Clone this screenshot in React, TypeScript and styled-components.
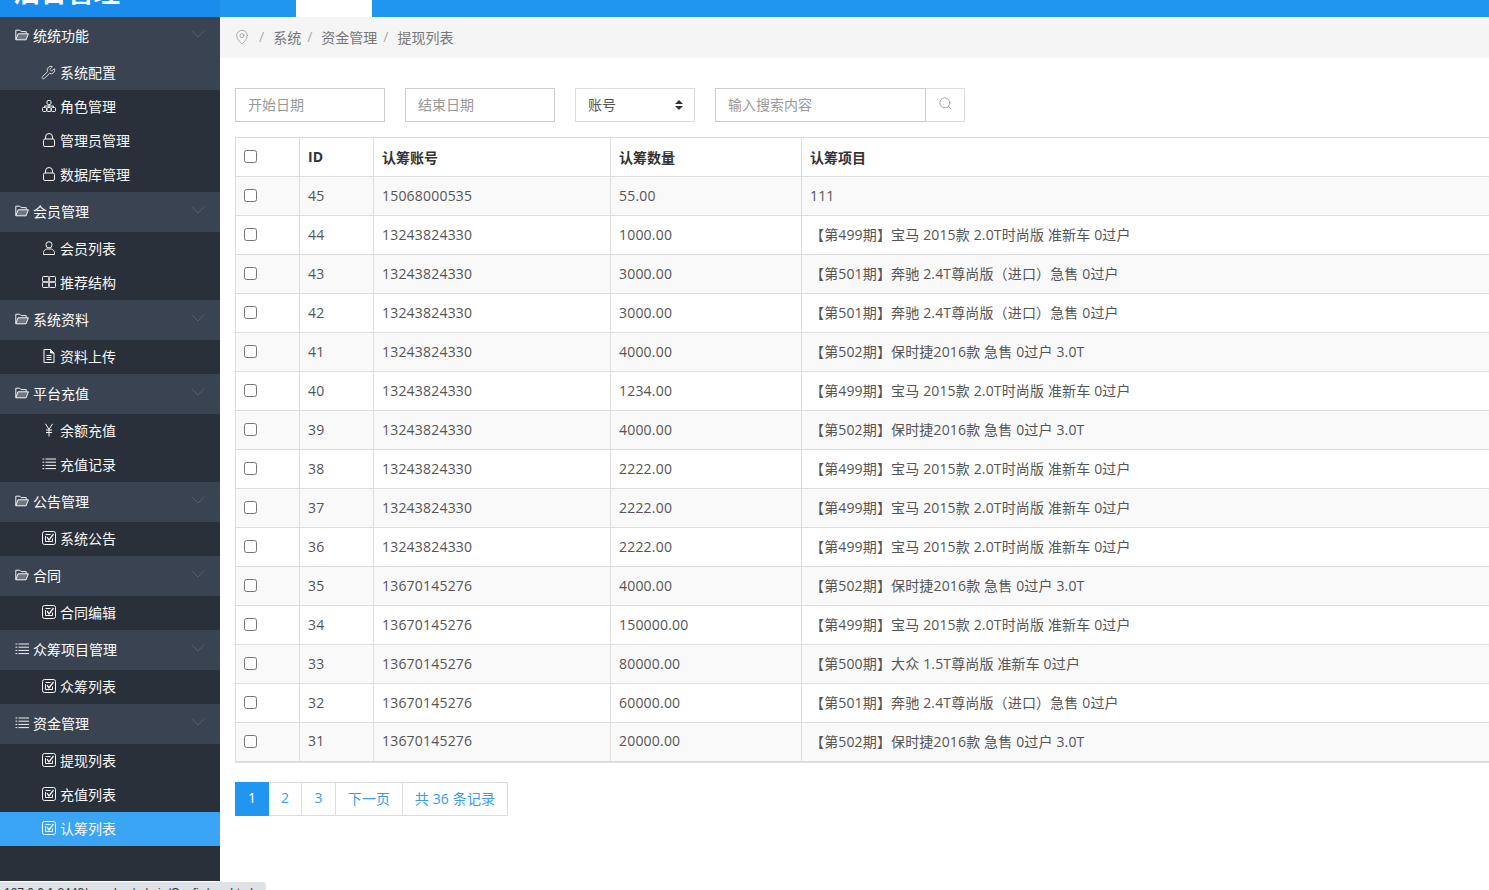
import React from 'react';
import styled, { createGlobalStyle } from 'styled-components';
import { MapPin, Search, Wrench } from 'lucide-react';

const FONT = '"Open Sans", "Noto Sans CJK SC", sans-serif';

const GlobalStyle = createGlobalStyle`
  html, body {
    margin: 0;
    height: 100%;
    overflow: hidden;
    background: #fff;
  }
  body {
    font-family: ${FONT};
    font-size: 14px;
    color: #555;
  }
  * {
    box-sizing: border-box;
  }
`;

const FolderIcon = () => (
  <Glyph viewBox="0 0 14 12">
    <path d="M.8 10.5V1.2h4l1.2 1.4h5.2v2" />
    <path d="M.8 10.8 3 4.8h10.4l-2.3 6z" fill="rgba(255,255,255,.28)" />
  </Glyph>
);

const WrenchIcon = () => (
  <WrenchBox>
    <Wrench size={15} strokeWidth={1.3} />
  </WrenchBox>
);

const SitemapIcon = () => (
  <Glyph viewBox="0 0 14 14">
    <rect x="5" y="1.5" width="4" height="4" rx="1.2" />
    <path d="M7 5.5V8M2.5 8.5V7h9v1.5" />
    <rect x=".5" y="8.5" width="4" height="4" rx="1" />
    <rect x="5" y="8.5" width="4" height="4" rx="1" />
    <rect x="9.5" y="8.5" width="4" height="4" rx="1" />
  </Glyph>
);

const LockIcon = () => (
  <Glyph viewBox="0 0 14 14">
    <rect x="1.5" y="6" width="11" height="7.5" rx="1.5" />
    <path d="M3.5 6V4a3.5 3.5 0 0 1 7 0v2" />
  </Glyph>
);

const UserIcon = () => (
  <Glyph viewBox="0 0 14 14">
    <circle cx="7" cy="3.8" r="3.1" />
    <path d="M1.5 13.5v-1.7c0-2 1.5-3.3 3.3-3.8h4.4c1.8.5 3.3 1.8 3.3 3.8v1.700z" />
  </Glyph>
);

const GridIcon = () => (
  <Glyph viewBox="0 0 14 14">
    <rect x=".5" y="1.5" width="6.3" height="5.3" rx="1" />
    <rect x="7.2" y="1.5" width="6.3" height="5.3" rx="1" />
    <rect x=".5" y="7.2" width="6.3" height="5.3" rx="1" />
    <rect x="7.2" y="7.2" width="6.3" height="5.3" rx="1" />
  </Glyph>
);

const FileIcon = () => (
  <Glyph viewBox="0 0 14 14">
    <path d="M2 .5h6.5L12 4v9.5H2z" />
    <path d="M8.5.5V4H12" fill="currentColor" />
    <path d="M4.5 6.500h5M4.5 8.500h5M4.5 10.500h5" />
  </Glyph>
);

const YenIcon = () => (
  <Glyph viewBox="0 0 14 14">
    <path d="M3.5.8 7 6.5 10.5.8M7 6.5v7M4 7h6M4 9.500h6" />
  </Glyph>
);

const ListIcon = () => (
  <Glyph viewBox="0 0 14 14">
    <path d="M.5 2h1.8M3.5 2H14M.5 5.200h1.8M3.5 5.200H14M.5 8.400h1.8M3.5 8.400H14M.5 11.600h1.8M3.5 11.600H14" />
  </Glyph>
);

const CheckIcon = () => (
  <Glyph viewBox="0 0 14 14">
    <rect x=".5" y=".5" width="13" height="13" rx="2" />
    <path d="M3.5 5v5.500h7V7.500M3.500 3.500h5" />
    <path d="M5 6.200 7 9l4.500-6" strokeWidth="1.300" />
  </Glyph>
);

const ChevronIcon = () => (
  <ChevronGlyph viewBox="0 0 14 8">
    <path d="M.5.5 7 7l6.500-6.500" />
  </ChevronGlyph>
);

const menu = [
  {
    title: '统统功能',
    icon: FolderIcon,
    items: [
      { label: '系统配置', icon: WrenchIcon, hover: true },
      { label: '角色管理', icon: SitemapIcon },
      { label: '管理员管理', icon: LockIcon },
      { label: '数据库管理', icon: LockIcon },
    ],
  },
  {
    title: '会员管理',
    icon: FolderIcon,
    items: [
      { label: '会员列表', icon: UserIcon },
      { label: '推荐结构', icon: GridIcon },
    ],
  },
  { title: '系统资料', icon: FolderIcon, items: [{ label: '资料上传', icon: FileIcon }] },
  {
    title: '平台充值',
    icon: FolderIcon,
    items: [
      { label: '余额充值', icon: YenIcon },
      { label: '充值记录', icon: ListIcon },
    ],
  },
  { title: '公告管理', icon: FolderIcon, items: [{ label: '系统公告', icon: CheckIcon }] },
  { title: '合同', icon: FolderIcon, items: [{ label: '合同编辑', icon: CheckIcon }] },
  { title: '众筹项目管理', icon: ListIcon, items: [{ label: '众筹列表', icon: CheckIcon }] },
  {
    title: '资金管理',
    icon: ListIcon,
    items: [
      { label: '提现列表', icon: CheckIcon },
      { label: '充值列表', icon: CheckIcon },
      { label: '认筹列表', icon: CheckIcon, active: true },
    ],
  },
];

const P499 = '【第499期】宝马 2015款 2.0T时尚版 准新车 0过户';
const P501 = '【第501期】奔驰 2.4T尊尚版（进口）急售 0过户';
const P502 = '【第502期】保时捷2016款 急售 0过户 3.0T';
const P500 = '【第500期】大众 1.5T尊尚版 准新车 0过户';

const rows = [
  ['45', '15068000535', '55.00', '111'],
  ['44', '13243824330', '1000.00', P499],
  ['43', '13243824330', '3000.00', P501],
  ['42', '13243824330', '3000.00', P501],
  ['41', '13243824330', '4000.00', P502],
  ['40', '13243824330', '1234.00', P499],
  ['39', '13243824330', '4000.00', P502],
  ['38', '13243824330', '2222.00', P499],
  ['37', '13243824330', '2222.00', P499],
  ['36', '13243824330', '2222.00', P499],
  ['35', '13670145276', '4000.00', P502],
  ['34', '13670145276', '150000.00', P499],
  ['33', '13670145276', '80000.00', P500],
  ['32', '13670145276', '60000.00', P501],
  ['31', '13670145276', '20000.00', P502],
];

const App = (): JSX.Element => {
  return (
    <Page>
      <GlobalStyle />
      <TopBar>
        <Logo>
          <LogoText>后台管理</LogoText>
        </Logo>
        <TopTab />
      </TopBar>
      <Body>
        <Sidebar>
          {menu.map((group, index) => (
            <div key={group.title}>
              <GroupHeader $first={index === 0}>
                <group.icon />
                <GroupTitle>{group.title}</GroupTitle>
                <ChevronIcon />
              </GroupHeader>
              {group.items.map((item) => (
                <SubItem key={item.label} $hover={item.hover} $active={item.active}>
                  <item.icon />
                  <span>{item.label}</span>
                </SubItem>
              ))}
            </div>
          ))}
        </Sidebar>
        <Main>
          <Breadcrumb>
            <PinBox>
              <MapPin size={16} strokeWidth={1} color="#888" />
            </PinBox>
            <Slash>/</Slash>
            <Crumb>系统</Crumb>
            <CrumbSlash>/</CrumbSlash>
            <Crumb>资金管理</Crumb>
            <CrumbSlash>/</CrumbSlash>
            <Crumb>提现列表</Crumb>
          </Breadcrumb>
          <Content>
            <Filters>
              <Field $width={150} placeholder="开始日期" />
              <Field $width={150} placeholder="结束日期" />
              <SelectBox>
                账号
                <Sorter>
                  <UpArrow />
                  <DownArrow />
                </Sorter>
              </SelectBox>
              <SearchGroup>
                <Field $width={211} placeholder="输入搜索内容" />
                <SearchButton>
                  <Search size={15} strokeWidth={1} color="#777" />
                </SearchButton>
              </SearchGroup>
            </Filters>
            <Table>
              <thead>
                <tr>
                  <CheckHead>
                    <Check type="checkbox" />
                  </CheckHead>
                  <IdHead>ID</IdHead>
                  <AccountHead>认筹账号</AccountHead>
                  <AmountHead>认筹数量</AmountHead>
                  <Th>认筹项目</Th>
                </tr>
              </thead>
              <tbody>
                {rows.map((row) => (
                  <Row key={row[0]}>
                    <Td>
                      <RowCheck type="checkbox" />
                    </Td>
                    <NumberCell>{row[0]}</NumberCell>
                    <NumberCell>{row[1]}</NumberCell>
                    <NumberCell>{row[2]}</NumberCell>
                    <ProjectCell>{row[3]}</ProjectCell>
                  </Row>
                ))}
              </tbody>
            </Table>
            <Pagination>
              <PageLink $current $width={34}>1</PageLink>
              <PageLink $width={33}>2</PageLink>
              <PageLink $width={34}>3</PageLink>
              <PageLink $width={67}>下一页</PageLink>
              <PageLink $width={105}>共 36 条记录</PageLink>
            </Pagination>
          </Content>
        </Main>
      </Body>
      <StatusTip>127.0.0.1:8443/member/admin/Config/sys.html</StatusTip>
    </Page>
  );
};

export default App;

const Page = styled.div`
  display: flex;
  flex-direction: column;
  height: 890px;
  overflow: hidden;
`;

const TopBar = styled.header`
  background-color: #2196f0;
  display: flex;
  flex-shrink: 0;
  height: 17px;
`;

const Logo = styled.div`
  align-items: flex-end;
  background-color: #1a8cec;
  display: flex;
  overflow: hidden;
  padding-left: 14px;
  width: 220px;
`;

const LogoText = styled.div`
  color: #fff;
  flex-shrink: 0;
  font-size: 26.5px;
  font-weight: 700;
  line-height: 36px;
  margin-bottom: 7px;
`;

const TopTab = styled.div`
  background-color: #fff;
  margin-left: 76px;
  width: 76px;
`;

const Body = styled.div`
  display: flex;
  flex: 1;
  min-height: 0;
`;

const Sidebar = styled.aside`
  background-color: #2a3039;
  flex-shrink: 0;
  height: 864px;
  width: 220px;
`;

const Glyph = styled.svg`
  fill: none;
  flex-shrink: 0;
  height: 14px;
  stroke: currentColor;
  stroke-width: 1;
  width: 14px;
`;

const WrenchBox = styled.span`
  display: flex;
  height: 14px;
  margin-left: -1px;
  width: 15px;
`;

const ChevronGlyph = styled.svg`
  fill: none;
  height: 8px;
  margin: -3px 0 0 auto;
  stroke: #505b6b;
  stroke-width: 1;
  width: 14px;
`;

const GroupHeader = styled.div<{ $first?: boolean }>`
  align-items: center;
  background-color: #394352;
  color: #f2f2f2;
  display: flex;
  height: ${(p) => (p.$first ? 39 : 40)}px;
  padding: 0 15px ${(p) => (p.$first ? 3 : 2)}px 15px;
`;

const GroupTitle = styled.span`
  color: #fff;
  margin-left: 4px;
`;

const SubItem = styled.div<{ $hover?: boolean; $active?: boolean }>`
  align-items: center;
  background-color: ${(p) => (p.$active ? '#3ba5f5' : p.$hover ? '#394352' : 'transparent')};
  color: #f7f7f7;
  display: flex;
  gap: 4px;
  height: 34px;
  padding: 0 0 2px 42px;
`;

const Main = styled.main`
  flex: 1;
  min-width: 0;
`;

const Breadcrumb = styled.nav`
  align-items: center;
  background-color: #f5f5f5;
  color: #777;
  display: flex;
  height: 41px;
  padding: 0 0 2px 14px;
`;

const PinBox = styled.span`
  display: flex;
`;

const Slash = styled.span`
  color: #aaa;
  margin: 0 9px;
`;

const CrumbSlash = styled.span`
  color: #aaa;
  margin: 0 9px 0 6px;
`;

const Crumb = styled.span`
  color: #777;
`;

const Content = styled.div`
  padding: 30px 0 0 15px;
`;

const Filters = styled.div`
  display: flex;
  gap: 20px;
  height: 34px;
`;

const Field = styled.input<{ $width: number }>`
  border: 1px solid #ccc;
  color: #555;
  font-family: ${FONT};
  font-size: 14px;
  height: 34px;
  outline: none;
  padding: 0 12px 2px;
  width: ${(p) => p.$width}px;

  &::placeholder {
    color: #999;
  }
`;

const SelectBox = styled.div`
  align-items: center;
  border: 1px solid #ddd;
  color: #555;
  display: flex;
  justify-content: space-between;
  padding: 0 12px 2px;
  width: 120px;
`;

const Sorter = styled.span`
  display: flex;
  flex-direction: column;
  gap: 2px;
  margin: 2px -1px 0 0;
`;

const UpArrow = styled.i`
  border-bottom: 4px solid #333;
  border-left: 4px solid transparent;
  border-right: 4px solid transparent;
  display: block;
`;

const DownArrow = styled.i`
  border-left: 4px solid transparent;
  border-right: 4px solid transparent;
  border-top: 4px solid #333;
  display: block;
`;

const SearchGroup = styled.div`
  display: flex;
  width: 250px;
`;

const SearchButton = styled.div`
  align-items: center;
  border: 1px solid #ddd;
  border-left: 0;
  display: flex;
  justify-content: center;
  padding-bottom: 3px;
  width: 39px;
`;

const Table = styled.table`
  border-bottom: 2px solid #ddd;
  border-collapse: collapse;
  margin-top: 15px;
  table-layout: fixed;
  width: 1300px;
`;

const Th = styled.th`
  border: 1px solid #ddd;
  color: #333;
  font-size: 14px;
  font-weight: 700;
  height: 39px;
  padding: 0 8px 1px;
  text-align: left;
`;

const CheckHead = styled(Th)`
  width: 64px;
`;

const IdHead = styled(Th)`
  width: 74px;
`;

const AccountHead = styled(Th)`
  width: 237px;
`;

const AmountHead = styled(Th)`
  width: 191px;
`;

const Row = styled.tr`
  &:nth-child(odd) {
    background-color: #f9f9f9;
  }
`;

const Td = styled.td`
  border: 1px solid #ddd;
  color: #555;
  height: 39px;
  padding: 0 8px 2px;
`;

const NumberCell = styled(Td)`
  letter-spacing: 0.2px;
`;

const ProjectCell = styled(Td)`
  letter-spacing: 0.15px;
`;

const Check = styled.input`
  display: block;
  height: 13px;
  margin: 0 0 1px 0;
  width: 13px;
`;

const RowCheck = styled(Check)`
  margin: 1px 0 0 0;
`;

const Pagination = styled.div`
  display: flex;
  margin-top: 19px;
`;

const PageLink = styled.a<{ $current?: boolean; $width: number }>`
  align-items: center;
  background-color: ${(p) => (p.$current ? '#2196f0' : '#fff')};
  border: 1px solid ${(p) => (p.$current ? '#2196f0' : '#ddd')};
  border-left-width: ${(p) => (p.$current ? 1 : 0)}px;
  color: ${(p) => (p.$current ? '#fff' : '#3a9bef')};
  display: flex;
  height: 34px;
  justify-content: center;
  letter-spacing: 0.15px;
  padding-bottom: 2px;
  width: ${(p) => p.$width}px;
`;

const StatusTip = styled.div`
  background-color: #dee1e6;
  border-top-right-radius: 4px;
  bottom: 0;
  color: #333;
  font-family: "Liberation Sans", sans-serif;
  font-size: 12px;
  height: 8px;
  left: 0;
  line-height: 16px;
  overflow: hidden;
  padding: 3px 0 0 4px;
  position: fixed;
  width: 266px;
`;
